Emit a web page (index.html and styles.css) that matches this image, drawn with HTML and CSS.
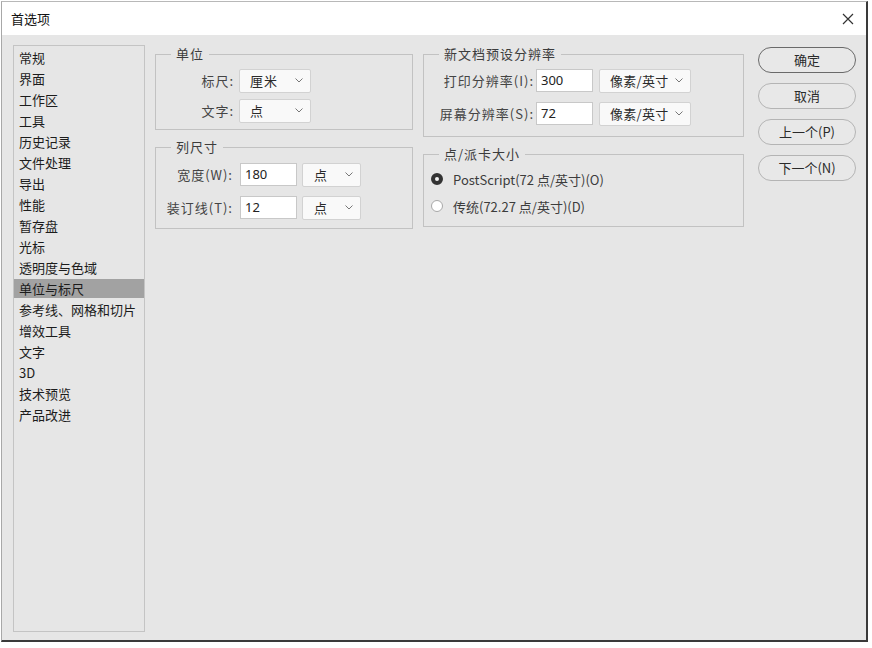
FILE: index.html
```html
<!DOCTYPE html>
<html lang="zh">
<head>
<meta charset="utf-8">
<title>首选项</title>
<link rel="stylesheet" href="styles.css">
</head>
<body>
<div class="window">
  <div class="titlebar">
    <span class="title">首选项</span>
    <svg class="close" width="12" height="12" viewBox="0 0 12 12"><path d="M1 1 L11 11 M11 1 L1 11" stroke="#333" stroke-width="1.2" fill="none"/></svg>
  </div>
  <div class="content">
    <div class="list">
      <div class="item">常规</div>
      <div class="item">界面</div>
      <div class="item">工作区</div>
      <div class="item">工具</div>
      <div class="item">历史记录</div>
      <div class="item">文件处理</div>
      <div class="item">导出</div>
      <div class="item">性能</div>
      <div class="item">暂存盘</div>
      <div class="item">光标</div>
      <div class="item">透明度与色域</div>
      <div class="item selected">单位与标尺</div>
      <div class="item">参考线、网格和切片</div>
      <div class="item">增效工具</div>
      <div class="item">文字</div>
      <div class="item">3D</div>
      <div class="item">技术预览</div>
      <div class="item">产品改进</div>
    </div>

    <div class="col col-left">
      <fieldset class="group g-units">
        <legend>单位</legend>
        <div class="row">
          <span class="label l-units">标尺:</span>
          <div class="select s-units"><span>厘米</span><svg class="chev" width="8" height="5" viewBox="0 0 8 5"><polyline points="0.5,0.5 4,4 7.5,0.5" fill="none" stroke="#777" stroke-width="1"/></svg></div>
        </div>
        <div class="row">
          <span class="label l-units">文字:</span>
          <div class="select s-units"><span>点</span><svg class="chev" width="8" height="5" viewBox="0 0 8 5"><polyline points="0.5,0.5 4,4 7.5,0.5" fill="none" stroke="#777" stroke-width="1"/></svg></div>
        </div>
      </fieldset>

      <fieldset class="group g-cols">
        <legend>列尺寸</legend>
        <div class="row">
          <span class="label l-cols">宽度(W):</span>
          <div class="input i-cols">180</div>
          <div class="select s-cols"><span>点</span><svg class="chev" width="8" height="5" viewBox="0 0 8 5"><polyline points="0.5,0.5 4,4 7.5,0.5" fill="none" stroke="#777" stroke-width="1"/></svg></div>
        </div>
        <div class="row">
          <span class="label l-cols">装订线(T):</span>
          <div class="input i-cols">12</div>
          <div class="select s-cols"><span>点</span><svg class="chev" width="8" height="5" viewBox="0 0 8 5"><polyline points="0.5,0.5 4,4 7.5,0.5" fill="none" stroke="#777" stroke-width="1"/></svg></div>
        </div>
      </fieldset>
    </div>

    <div class="col col-right">
      <fieldset class="group g-res">
        <legend>新文档预设分辨率</legend>
        <div class="row">
          <span class="label l-res">打印分辨率(I):</span>
          <div class="input i-res">300</div>
          <div class="select s-res"><span>像素/英寸</span><svg class="chev" width="8" height="5" viewBox="0 0 8 5"><polyline points="0.5,0.5 4,4 7.5,0.5" fill="none" stroke="#777" stroke-width="1"/></svg></div>
        </div>
        <div class="row">
          <span class="label l-res">屏幕分辨率(S):</span>
          <div class="input i-res">72</div>
          <div class="select s-res"><span>像素/英寸</span><svg class="chev" width="8" height="5" viewBox="0 0 8 5"><polyline points="0.5,0.5 4,4 7.5,0.5" fill="none" stroke="#777" stroke-width="1"/></svg></div>
        </div>
      </fieldset>

      <fieldset class="group g-pica">
        <legend>点/派卡大小</legend>
        <div class="radio-row">
          <span class="radio checked"></span>
          <span class="radio-label">PostScript(72 点/英寸)(O)</span>
        </div>
        <div class="radio-row">
          <span class="radio"></span>
          <span class="radio-label">传统(72.27 点/英寸)(D)</span>
        </div>
      </fieldset>
    </div>

    <div class="buttons">
      <div class="btn default">确定</div>
      <div class="btn">取消</div>
      <div class="btn">上一个(P)</div>
      <div class="btn">下一个(N)</div>
    </div>
  </div>
</div>
</body>
</html>
```

FILE: styles.css
```css
html, body {
  margin: 0;
  padding: 0;
  background: #ffffff;
}
body {
  font-family: "Noto Sans CJK SC", "Noto Sans", sans-serif;
  font-size: 13px;
  color: #222;
}
.window {
  margin: 1px 0 0 1px;
  width: 867px;
  height: 641px;
  box-sizing: border-box;
  border-left: 1px solid #a8a8a8;
  border-top: 1px solid #b8b8b8;
  border-right: 2px solid #3a3a3a;
  border-bottom: 2px solid #3a3a3a;
  display: flex;
  flex-direction: column;
  background: #e6e6e6;
}
.titlebar {
  height: 33px;
  background: #ffffff;
  display: flex;
  align-items: center;
  justify-content: space-between;
  padding: 0 10px 0 9px;
  flex: none;
}
.title {
  font-size: 13px;
  color: #111;
  line-height: 16px;
}
.close {
  margin-right: 2px;
}
.content {
  flex: 1;
  display: flex;
  align-items: flex-start;
  padding: 10px 11px 9px 11px;
}
.list {
  width: 132px;
  height: 587px;
  box-sizing: border-box;
  border: 1px solid #c4c4c4;
  padding-top: 2px;
  flex: none;
}
.item {
  line-height: 19px;
  height: 19px;
  margin-bottom: 2px;
  padding-left: 5px;
  white-space: nowrap;
  color: #1c1c1c;
}
.item.selected {
  background: #a2a2a2;
}
.col {
  display: flex;
  flex-direction: column;
  flex: none;
}
.col-left {
  width: 258px;
  margin-left: 10px;
}
.col-right {
  width: 321px;
  margin-left: 10px;
}
.group {
  margin: 0;
  padding: 0;
  border: 1px solid #c2c2c2;
  min-width: 0;
}
.group legend {
  margin-left: 15px;
  padding: 0 5px;
  line-height: 18px;
  letter-spacing: 1px;
  color: #3c3c3c;
}
.g-units { padding: 5px 0 6px 0; }
.g-cols { padding: 6px 0 8px 0; margin-top: 8px; }
.g-res { padding: 5px 0 10px 0; }
.g-pica { padding: 5px 0 9px 0; margin-top: 8px; }

.row {
  display: flex;
  align-items: center;
  height: 25px;
}
.g-units .row + .row { margin-top: 5px; }
.g-cols .row + .row { margin-top: 8px; }
.g-res .row + .row { margin-top: 8px; }

.label {
  text-align: right;
  letter-spacing: 1px;
  color: #444;
  white-space: nowrap;
  flex: none;
}
.l-units { width: 78px; margin-right: 5px; }
.l-cols { width: 77px; margin-right: 7px; }
.l-res { width: 110px; margin-right: 2px; }

.input {
  height: 23px;
  box-sizing: border-box;
  border: 1px solid #c8c8c8;
  background: #ffffff;
  padding-left: 4px;
  line-height: 21px;
  color: #222;
  font-family: "Noto Sans", "Noto Sans CJK SC", sans-serif;
  font-size: 13px;
  flex: none;
}
.i-cols { width: 57px; margin-right: 5px; }
.i-res { width: 57px; margin-right: 6px; }

.select {
  height: 24px;
  box-sizing: border-box;
  border: 1px solid #d2d2d2;
  border-radius: 2px;
  background: #f9f9f9;
  display: flex;
  align-items: center;
  justify-content: space-between;
  padding: 0 7px 0 10px;
  letter-spacing: 1px;
  color: #2a2a2a;
  flex: none;
}
.s-units { width: 72px; }
.s-cols { width: 59px; padding-left: 11px; }
.s-res { width: 92px; padding-left: 10px; padding-right: 7px; letter-spacing: 0.3px; }
.chev { flex: none; }

.radio-row {
  display: flex;
  align-items: center;
  height: 22px;
  padding-left: 7px;
}
.radio-row + .radio-row { margin-top: 5px; }
.radio {
  width: 12px;
  height: 12px;
  box-sizing: border-box;
  border-radius: 50%;
  border: 1px solid #a8a8a8;
  background: #ffffff;
  margin-right: 10px;
  flex: none;
}
.radio.checked {
  border: 4px solid #333;
  background: #f4f4f4;
}
.radio-label {
  color: #3c3c3c;
  white-space: nowrap;
}

.buttons {
  display: flex;
  flex-direction: column;
  width: 98px;
  margin-left: 14px;
  margin-top: 2px;
  gap: 10px;
  flex: none;
}
.btn {
  height: 26px;
  box-sizing: border-box;
  border: 1px solid #b4b4b4;
  border-radius: 13px;
  background: #e8e8e8;
  text-align: center;
  line-height: 24px;
  color: #2a2a2a;
}
.btn.default {
  border-color: #6a6a6a;
}
```
